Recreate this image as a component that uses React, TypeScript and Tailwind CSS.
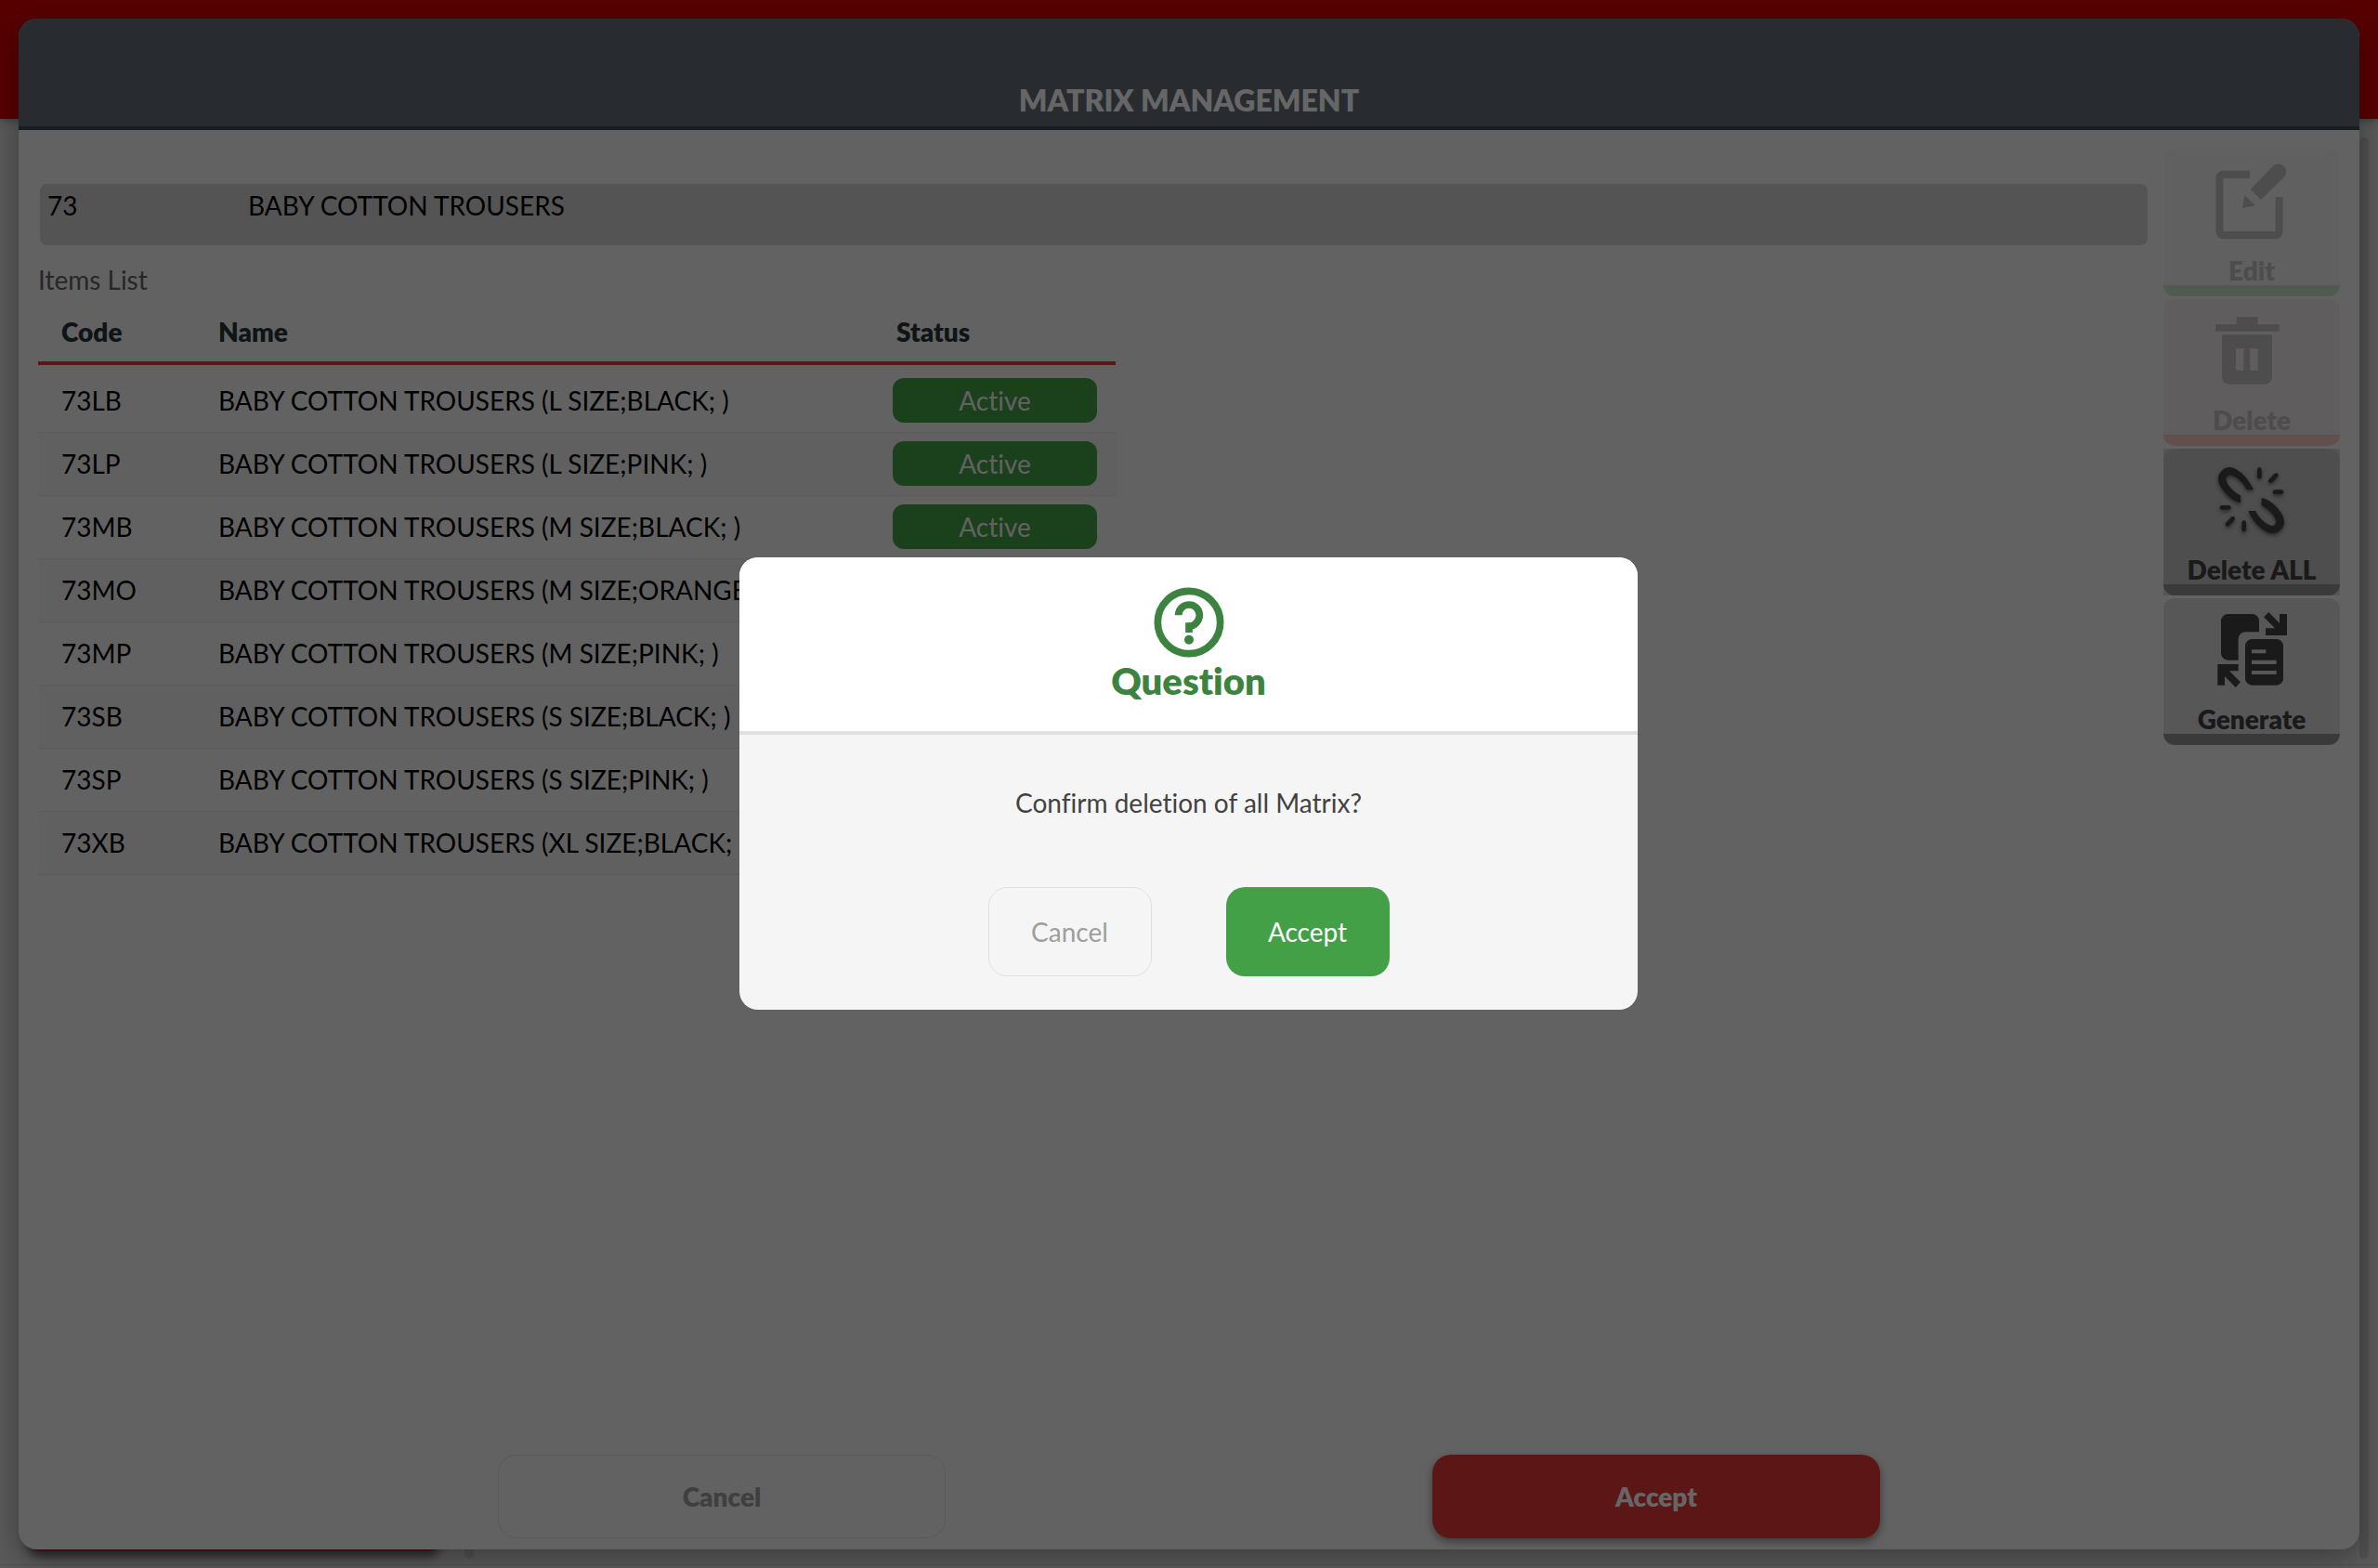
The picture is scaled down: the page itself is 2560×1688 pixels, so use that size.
import React from "react";

type IconProps = { className?: string };

const iconSize = "w-20 h-[88px] shrink-0";

function EditIcon() {
  return (
    <svg viewBox="252 93 240 264" className={iconSize} fill="currentColor" aria-hidden="true">
      <path d="M366 131H280a24 24 0 0 0-24 24V328a24 24 0 0 0 24 24H449a24 24 0 0 0 24-24V216H449V327H280V156H366z" />
      <path d="M368 191L443 115A25 25 0 0 1 479 149L402 225z" />
      <path d="M349 210L384 244L342 252z" />
    </svg>
  );
}

function TrashIcon() {
  return (
    <svg viewBox="252 576 240 264" className={iconSize} fill="currentColor" aria-hidden="true">
      <path d="M255 627H323V603H392V627H461V650H255z" />
      <path
        fillRule="evenodd"
        d="M276 661H438V799a22 22 0 0 1-22 22H298a22 22 0 0 1-22-22zM321 706V776H346V706zM367 706V776H392V706z"
      />
    </svg>
  );
}

function BrokenChainIcon() {
  return (
    <svg
      viewBox="252 69 240 264"
      className="h-[88px] w-20 shrink-0 drop-shadow-[0_2px_2px_rgba(0,0,0,0.5)]"
      fill="currentColor"
      aria-hidden="true"
    >
      <path d="M378 172C365 140 330 100 301 99C280 99 264 118 264 137C266 165 300 205 336 214V190C315 180 290 155 289 137C289 130 297 124 304 124C322 127 347 150 356 172z" />
      <path d="M361 240C374 272 409 312 440 312C461 312 477 294 477 274C475 246 441 206 404 198V222C424 232 450 257 451 275C451 282 444 288 437 288C419 285 394 262 384 240z" />
      <path
        d="M397 107V130M451 125L433 143M447 179H468M276 229H298M311 265L294 283M347 278V300"
        fill="none"
        stroke="currentColor"
        strokeWidth="14"
        strokeLinecap="round"
      />
    </svg>
  );
}

function GenerateIcon() {
  return (
    <svg viewBox="252 552 240 264" className={iconSize} fill="currentColor" aria-hidden="true">
      <path d="M295 573H374a22 22 0 0 1 22 22V631H352a23 23 0 0 0-23 23V722H295a22 22 0 0 1-22-22V595a22 22 0 0 1 22-22z" />
      <path
        fillRule="evenodd"
        d="M373 654H452a22 22 0 0 1 22 22V781a22 22 0 0 1-22 22H373a22 22 0 0 1-22-22V676a22 22 0 0 1 22-22zM372 688V700H418V688zM372 722V735H452V722zM372 756V768H452V756z"
      />
      <path d="M427 567L462 603V573H486V642H417V619H447L411 583z" />
      <path d="M262 735H329V757H300L336 793L320 810L285 774V803H262z" />
    </svg>
  );
}

function QuestionIcon({ className }: IconProps) {
  return (
    <svg viewBox="0 0 270 270" className={className} fill="none" stroke="currentColor" strokeWidth="23" aria-hidden="true">
      <circle cx="135" cy="135" r="101" />
      <path d="M101 112A34 34 0 0 1 169 112C169 128 155 148 135 148" />
      <path d="M135 136V168" />
      <circle cx="135" cy="191" r="15" fill="currentColor" stroke="none" />
    </svg>
  );
}

const items = [
  ["73LB", "BABY COTTON TROUSERS (L SIZE;BLACK; )"],
  ["73LP", "BABY COTTON TROUSERS (L SIZE;PINK; )"],
  ["73MB", "BABY COTTON TROUSERS (M SIZE;BLACK; )"],
  ["73MO", "BABY COTTON TROUSERS (M SIZE;ORANGE; )"],
  ["73MP", "BABY COTTON TROUSERS (M SIZE;PINK; )"],
  ["73SB", "BABY COTTON TROUSERS (S SIZE;BLACK; )"],
  ["73SP", "BABY COTTON TROUSERS (S SIZE;PINK; )"],
  ["73XB", "BABY COTTON TROUSERS (XL SIZE;BLACK; )"],
];

const toolButton =
  "flex h-[158px] w-full flex-col items-center justify-between rounded-xl border-b-12 pt-[10px] font-extrabold leading-8";

function ItemsTable() {
  return (
    <table className="w-[1160px] table-fixed border-collapse text-left">
      <thead>
        <tr className="h-[54px] border-b-4 border-[#e53935] text-[#263238]">
          <th className="w-[169px] pl-[25px] align-top font-extrabold">Code</th>
          <th className="pl-[25px] align-top font-extrabold">Name</th>
          <th className="w-[265px] pl-[29px] align-top font-extrabold">Status</th>
        </tr>
      </thead>
      <tbody>
        <tr className="h-[6px]" aria-hidden="true" />
        {items.map(([code, name]) => (
          <tr key={code} className="h-[68px] border-b border-[#e4e4e4] odd:bg-[#f1f1f1]">
            <td className="pl-[25px]">{code}</td>
            <td className="pl-[25px] whitespace-nowrap">{name}</td>
            <td className="pr-5 pl-[25px]">
              <span className="flex h-12 items-center justify-center rounded-xl bg-[#43a047] text-[#f5f5f5]">
                Active
              </span>
            </td>
          </tr>
        ))}
      </tbody>
    </table>
  );
}

function MatrixPanel() {
  return (
    <main className="relative flex flex-1 flex-col overflow-hidden rounded-[20px] bg-[#f5f5f5] shadow-[0_8px_32px_rgba(0,0,0,0.35)]">
      <header className="flex h-[120px] shrink-0 items-end justify-center border-b-4 border-[#434956] bg-[#646b76] pb-2">
        <h1 className="text-[32px] leading-10 font-extrabold text-white">MATRIX MANAGEMENT</h1>
      </header>

      <div className="flex flex-1 gap-[17px] px-[21px] pt-[21px]">
        <section className="flex-1">
          <div className="mt-[37px] ml-[2px] flex h-[66px] items-start rounded-lg bg-[#d3d3d3] pt-[3px] pl-2 leading-10">
            <span className="w-[216px]">73</span>
            <span>BABY COTTON TROUSERS</span>
          </div>
          <h2 className="mt-[17px] mb-4 leading-10 text-[#616161]">Items List</h2>
          <ItemsTable />
        </section>

        <aside className="flex w-[190px] flex-col gap-[3px]">
          <button type="button" disabled className={`${toolButton} border-[#cbe0c8] bg-[#efefef] text-[#c0c0c0]`}>
            <EditIcon />
            <span>Edit</span>
          </button>
          <button type="button" disabled className={`${toolButton} border-[#f3c8c3] bg-[#f1e9ea] text-[#c0c0c0]`}>
            <TrashIcon />
            <span>Delete</span>
          </button>
          <div className="bg-[#d8d8d8]">
            <button type="button" className={`${toolButton} border-[#929292] bg-[#c2c2c2] text-[#424242]`}>
              <BrokenChainIcon />
              <span>Delete ALL</span>
            </button>
          </div>
          <button type="button" className={`${toolButton} border-[#929292] bg-[#dadada] text-[#424242]`}>
            <GenerateIcon />
            <span>Generate</span>
          </button>
        </aside>
      </div>

      <footer className="mx-auto mb-3 grid w-4/5 grid-cols-2 justify-items-center px-[2px] font-extrabold">
        <button type="button" className="h-[90px] w-[48%] rounded-[20px] border border-[#e0e0e0] text-[#9e9e9e]">
          Cancel
        </button>
        <button
          type="button"
          className="h-[90px] w-[48%] rounded-[20px] bg-[#e53935] text-white shadow-[0_4px_10px_rgba(0,0,0,0.4)]"
        >
          Accept
        </button>
      </footer>
    </main>
  );
}

function ConfirmDialog() {
  return (
    <div
      role="dialog"
      aria-modal="true"
      aria-labelledby="confirm-title"
      className="w-[967px] overflow-hidden rounded-[20px] bg-[#f5f5f5] text-center"
    >
      <header className="flex h-[191px] flex-col items-center border-b-4 border-[#e0e0e0] bg-white pt-[25px] text-[#3b833e]">
        <QuestionIcon className="size-[90px]" />
        <h2 id="confirm-title" className="text-[40px] leading-9 font-extrabold">
          Question
        </h2>
      </header>
      <p className="mt-[53px] leading-10 text-[#424242]">Confirm deletion of all Matrix?</p>
      <div className="mt-[71px] mb-9 flex justify-center gap-20">
        <button type="button" className="h-24 w-44 rounded-[20px] border border-[#e0e0e0] text-[#9e9e9e]">
          Cancel
        </button>
        <button type="button" className="h-24 w-44 rounded-[20px] bg-[#43a047] text-white">
          Accept
        </button>
      </div>
    </div>
  );
}

function Backdrop() {
  return (
    <div className="absolute inset-0" aria-hidden="true">
      <div className="absolute inset-x-0 top-0 h-32 bg-[#da0000] shadow-[0_2px_8px_rgba(0,0,0,0.3)]" />
      <div className="absolute bottom-[18px] left-7 h-10 w-[448px] rounded-2xl bg-[#c62828] shadow-[0_6px_10px_rgba(0,0,0,0.5)]" />
      <div className="absolute bottom-[10px] left-[500px] h-10 w-[10px] rounded-full bg-black/10" />
      <div className="absolute top-[148px] right-[10px] bottom-[10px] w-[10px] rounded-full bg-black/10" />
      <div className="absolute inset-x-0 bottom-[3px] h-px bg-black/10" />
    </div>
  );
}

export default function App() {
  return (
    <div className="relative flex min-h-screen overflow-hidden bg-[#e0e0e0] p-5 font-['Lato',sans-serif] text-[28px] leading-10 text-black [font-variant-ligatures:none]">
      <Backdrop />
      <MatrixPanel />
      <div className="absolute inset-0 flex items-center justify-center bg-black/60 pr-px pb-px">
        <ConfirmDialog />
      </div>
    </div>
  );
}
